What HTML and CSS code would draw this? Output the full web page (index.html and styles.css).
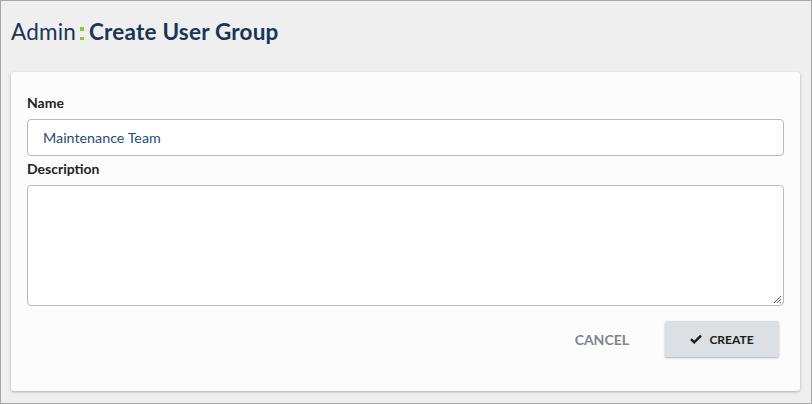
FILE: index.html
```html
<!DOCTYPE html>
<html>
<head>
<meta charset="utf-8">
<link rel="stylesheet" href="styles.css">
</head>
<body>
<div class="frame">
  <h1 class="title"><span class="crumb">Admin</span><span class="sep"><i></i><i></i></span><span class="page">Create User Group</span></h1>
  <div class="card">
    <label class="label">Name</label>
    <div class="input">Maintenance Team</div>
    <label class="label">Description</label>
    <div class="textarea">
      <svg class="grip" width="9" height="9" viewBox="0 0 9 9"><path d="M8 1 L1 8 M8 4 L4 8 M8 7 L7 8" stroke="#555" stroke-width="1"/></svg>
    </div>
    <div class="actions">
      <button class="btn-cancel">CANCEL</button>
      <button class="btn-create"><svg width="12" height="10" viewBox="0 0 12 10"><path d="M1 5.2 L4.2 8.3 L11 1.6" fill="none" stroke="#1a1a1a" stroke-width="2.4"/></svg>CREATE</button>
    </div>
  </div>
</div>
</body>
</html>
```
FILE: styles.css
```css
html, body { margin: 0; padding: 0; }
body { font-family: Lato, "Open Sans", sans-serif; }
.frame {
  box-sizing: border-box;
  width: 812px;
  height: 404px;
  border: 1px solid #a6a6a6;
  background: #efefef;
  padding: 0 11px 0 10px;
}
.title {
  margin: 0;
  height: 71px;
  display: flex;
  align-items: center;
  font-size: 22.5px;
  color: #1b3558;
  padding-bottom: 10px;
  box-sizing: border-box;
  letter-spacing: 0.2px;
}
.crumb { font-weight: 400; }
.sep {
  display: inline-flex;
  flex-direction: column;
  gap: 6px;
  margin: 4px 5px 0 4px;
}
.sep i { display: block; width: 4px; height: 3.5px; background: #8cc63f; }
.page { font-weight: 700; }
.card {
  background: #fcfcfc;
  border-radius: 3px;
  box-shadow: 0 1px 3px rgba(0,0,0,0.28);
  padding: 23px 16px 34px 16px;
  display: flex;
  flex-direction: column;
}
.label {
  font-size: 14px;
  font-weight: 700;
  color: #222;
  line-height: 16px;
  margin-bottom: 8px;
}
.input {
  box-sizing: border-box;
  height: 37px;
  border: 1px solid #b7b9bc;
  border-radius: 4px;
  background: #fff;
  padding: 0 15px;
  display: flex;
  align-items: center;
  font-size: 14.3px;
  color: #284c74;
  margin-bottom: 5px;
}
.textarea {
  position: relative;
  box-sizing: border-box;
  height: 121px;
  border: 1px solid #b7b9bc;
  border-radius: 4px;
  background: #fff;
}
.grip { position: absolute; right: 1px; bottom: 1px; }
.actions {
  display: flex;
  justify-content: flex-end;
  align-items: center;
  margin-top: 15px;
  gap: 36px;
  padding-right: 5px;
}
button { font-family: Lato, "Open Sans", sans-serif; border: none; cursor: pointer; }
.btn-cancel {
  background: none;
  font-size: 14px;
  font-weight: 700;
  color: #80858c;
  padding: 0;
}
.btn-create {
  width: 114px;
  height: 36px;
  background: #dcdfe3;
  border-radius: 2px;
  box-shadow: 0 1px 2px rgba(0,0,0,0.3);
  font-size: 12px;
  font-weight: 700;
  color: #1c1c1c;
  display: flex;
  align-items: center;
  justify-content: center;
  gap: 7px;
}
```
